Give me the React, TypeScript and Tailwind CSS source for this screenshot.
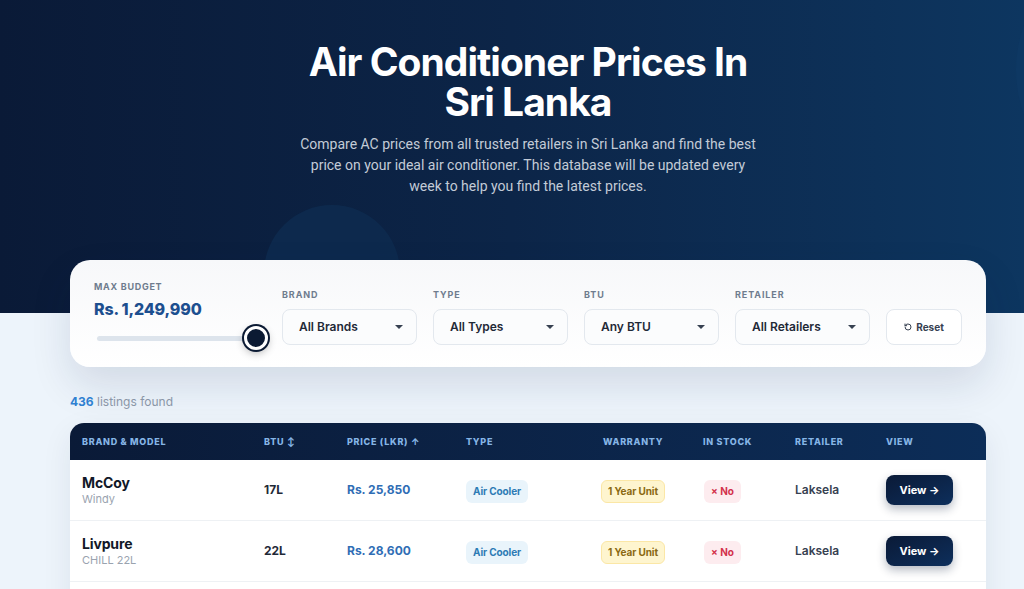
import { RotateCw } from "lucide-react";

const filters = [
  { label: "Brand", value: "All Brands" },
  { label: "Type", value: "All Types" },
  { label: "BTU", value: "Any BTU" },
  { label: "Retailer", value: "All Retailers" },
];

const rows = [
  { brand: "McCoy", model: "Windy", btu: "17L", price: "Rs. 25,850" },
  { brand: "Livpure", model: "CHILL 22L", btu: "22L", price: "Rs. 28,600" },
];

const cols = "grid grid-cols-[182px_83px_119px_137px_100px_92px_91px_1fr] pl-3";

export default function App() {
  return (
    <div className="min-h-screen bg-[#edf4fb] overflow-hidden" style={{ fontFamily: "Inter, 'Noto Sans', sans-serif" }}>
      {/* Hero */}
      <section className="relative h-[313px] bg-gradient-to-r from-[#0a1a37] via-[#0c2548] to-[#0d3660] overflow-hidden">
        <div className="absolute left-[264px] top-[205px] w-[136px] h-[136px] rounded-full bg-[#0e2c50] opacity-80" />
        <div className="absolute left-[1016px] top-[-60px] w-[260px] h-[260px] rounded-full bg-[#0f3a66] opacity-60" />
        <div className="relative ml-[70px] w-[916px] pt-[42px] text-center">
          <h1 className="text-[39px] leading-[40px] font-bold text-white tracking-[-0.025em]">
            Air Conditioner Prices In
            <br />
            Sri Lanka
          </h1>
          <p
            className="mt-3 mx-auto w-[470px] text-[14px] leading-[21px] text-[#c3cbd7]"
            style={{ fontFamily: "Roboto, sans-serif" }}
          >
            Compare AC prices from all trusted retailers in Sri Lanka and find the best price on your ideal air
            conditioner. This database will be updated every week to help you find the latest prices.
          </p>
        </div>
      </section>

      <main className="relative ml-[70px] w-[916px] -mt-[53px]">
        {/* Filters card */}
        <div className="flex items-start gap-4 rounded-[20px] bg-gradient-to-b from-[#f7f8fa] to-white px-6 pt-[21px] pb-[17px] shadow-[0_18px_40px_rgba(15,35,70,0.12)]">
          <div className="w-[172px]">
            <div className="text-[9px] leading-[12px] font-bold uppercase tracking-[0.08em] text-[#6f7c8e]">Max Budget</div>
            <div className="mt-1 text-[16px] leading-[24px] font-extrabold text-[#1d4f8f] tracking-[-0.01em]">Rs. 1,249,990</div>
            <div className="relative mt-[5px] h-6 flex items-center">
              <div className="ml-[3px] h-[5px] w-[156px] rounded-full bg-[#dde4ec]" />
              <div className="absolute left-[150px] top-0 w-6 h-6 rounded-full bg-[#0b1a33] border-[3px] border-white ring-2 ring-[#0b1a33] shadow-[0_3px_8px_rgba(0,0,0,0.3)]" />
            </div>
          </div>
          {filters.map((f) => (
            <div key={f.label} className="w-[135px] mt-2">
              <div className="text-[9px] leading-[12px] font-bold uppercase tracking-[0.1em] text-[#6f7c8e]">{f.label}</div>
              <div className="mt-2 h-9 flex items-center justify-between rounded-lg border border-[#e3e8ee] bg-[#fbfcfd] pl-4 pr-[13px]">
                <span className="text-[12px] font-semibold text-[#1f2937]">{f.value}</span>
                <span className="w-0 h-0 border-l-[4px] border-r-[4px] border-t-[4px] border-l-transparent border-r-transparent border-t-[#374151]" />
              </div>
            </div>
          ))}
          <button className="mt-7 h-9 w-[76px] flex items-center justify-center gap-1 rounded-lg border border-[#e3e8ee] bg-white text-[10px] font-bold text-[#374151]">
            <RotateCw size={8} strokeWidth={3} className="-scale-x-100" />
            Reset
          </button>
        </div>

        <div className="mt-[27px] text-[12px] leading-4 text-[#8a96a7]">
          <span className="font-bold text-[#2f80d1]">436</span> listings found
        </div>

        {/* Table */}
        <div className="mt-[13px] min-h-[200px] rounded-t-[14px] overflow-hidden bg-white shadow-[0_10px_30px_rgba(15,35,70,0.08)]">
          <div className={`${cols} h-[37px] items-center bg-gradient-to-r from-[#0a1a37] to-[#0c2d58] text-[9px] font-extrabold uppercase tracking-[0.08em] text-[#86b5e6]`}>
            <div>Brand &amp; Model</div>
            <div>BTU ↕</div>
            <div>Price (LKR) ↑</div>
            <div>Type</div>
            <div>Warranty</div>
            <div>In Stock</div>
            <div>Retailer</div>
            <div>View</div>
          </div>
          {rows.map((r) => (
            <div key={r.brand} className={`${cols} h-[61px] items-center border-b border-[#eef1f4]`}>
              <div>
                <div className="text-[14px] leading-[18px] font-bold text-[#111827] tracking-[-0.01em]">{r.brand}</div>
                <div className="text-[11px] leading-[15px] text-[#9aa3af]">{r.model}</div>
              </div>
              <div className="text-[12px] font-bold text-[#1f2937]">{r.btu}</div>
              <div className="text-[12px] font-bold text-[#2f6db5]">{r.price}</div>
              <div>
                <span className="inline-flex h-[23px] items-center rounded-md bg-[#e9f4fb] px-[7px] text-[10px] font-bold text-[#2d7bb5] tracking-[-0.01em]">Air Cooler</span>
              </div>
              <div className="-ml-[2px]">
                <span className="inline-flex h-[23px] items-center rounded-md border border-[#fbe7a6] bg-[#fef5cf] px-[6px] text-[10px] font-bold text-[#8a6912] tracking-[-0.01em]">1 Year Unit</span>
              </div>
              <div className="ml-[1px]">
                <span className="inline-flex h-[23px] items-center rounded-md bg-[#fdecef] px-[7px] text-[10px] font-bold text-[#d3324b]">× No</span>
              </div>
              <div className="text-[12px] font-semibold text-[#374151]">Laksela</div>
              <div>
                <button className="h-[30px] w-[67px] rounded-lg bg-gradient-to-br from-[#0a1a37] to-[#0d2f5c] text-[11px] font-bold text-white shadow-[0_4px_10px_rgba(10,26,55,0.3)]">
                  View →
                </button>
              </div>
            </div>
          ))}
        </div>
      </main>
    </div>
  );
}
